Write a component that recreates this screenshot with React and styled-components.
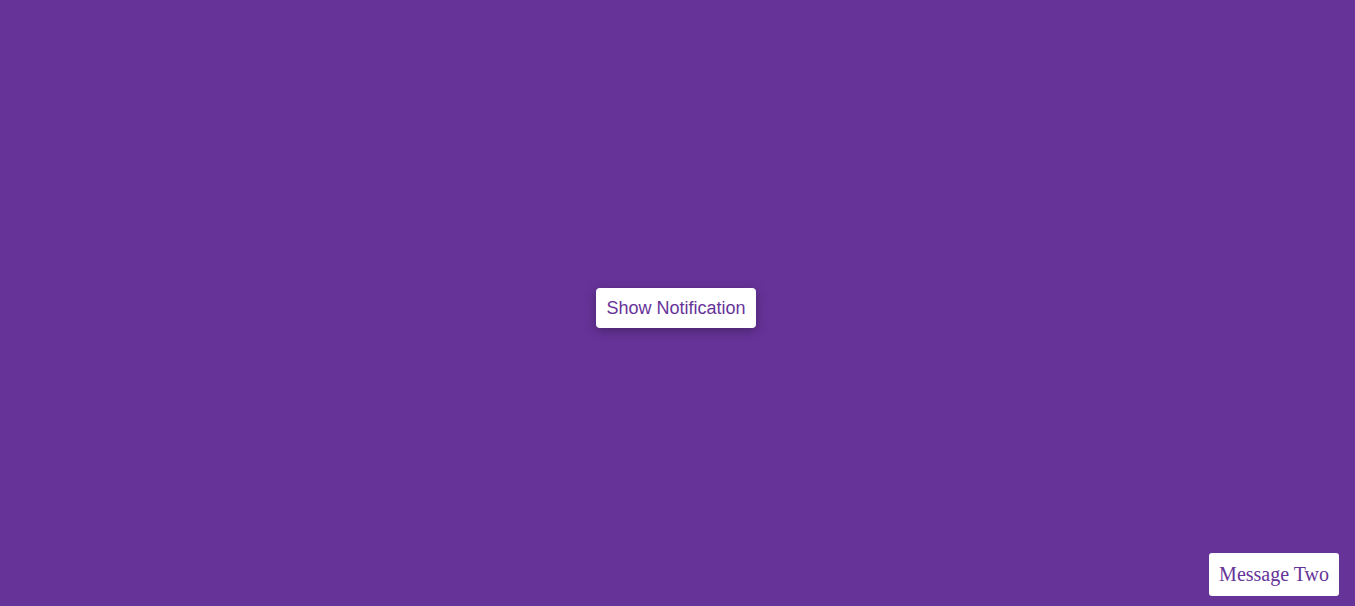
import React from 'react'
import styled, { createGlobalStyle } from 'styled-components'

const GlobalStyle = createGlobalStyle`
  html, body {
    margin: 0;
    padding: 0;
    height: 100%;
    background-color: #663399;
  }
  #root {
    height: 100%;
  }
`

const Page = styled.div`
  height: 100vh;
  display: flex;
  align-items: center;
  justify-content: center;
  padding-top: 10px;
  box-sizing: border-box;
`

const NotifyButton = styled.button`
  width: 160px;
  height: 40px;
  padding: 1px 0 0;
  border: none;
  border-radius: 4px;
  background-color: #fff;
  color: #663399;
  font-family: "Liberation Sans", Arial, sans-serif;
  font-size: 18px;
  text-align: center;
  box-shadow: 0 3px 12px rgba(0, 0, 0, 0.3);
  cursor: pointer;
  margin-left: -3px;
`

const ToastStack = styled.div`
  position: fixed;
  right: 16px;
  bottom: 10px;
  display: flex;
  flex-direction: column;
  align-items: flex-end;
`

const Toast = styled.div`
  background-color: #fff;
  color: #663399;
  font-family: "Liberation Serif", "Times New Roman", serif;
  font-size: 20px;
  line-height: 23px;
  padding: 10px;
  border-radius: 3px;
  margin: 5px 0 0;
`

export default function App() {
  return (
    <>
      <GlobalStyle />
      <Page>
        <NotifyButton>Show Notification</NotifyButton>
      </Page>
      <ToastStack>
        <Toast>Message Two</Toast>
      </ToastStack>
    </>
  )
}
